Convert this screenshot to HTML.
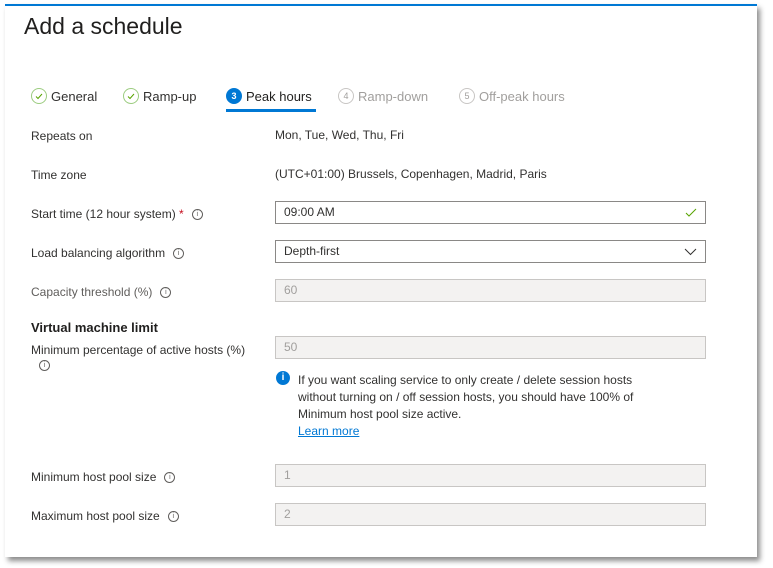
<!DOCTYPE html>
<html><head><style>
body{margin:0;width:773px;height:568px;background:#fff;position:relative;overflow:hidden;font-family:"Liberation Sans",sans-serif;color:#323130}
#panel{position:absolute;left:5px;top:4px;width:752px;height:551px;background:#fff;border-top:2px solid #0078d4;box-shadow:3px 4px 5px rgba(0,0,0,.45)}
.a{position:absolute;white-space:nowrap}
.l{font-size:12px;left:31px}
.v{font-size:12px;left:275px}
.in{position:absolute;left:275px;width:421px;height:21px;border:1px solid #8a8886;font-size:12px;line-height:21px;padding-left:8px}
.dis{background:#f3f2f1;border-color:#c8c6c4;color:#a19f9d}
.i{display:inline-block;width:9px;height:9px;border:1px solid #605e5c;border-radius:50%;font-size:7px;line-height:9px;text-align:center;vertical-align:middle;margin-left:8px;color:#605e5c}
.tab{font-size:13px;top:87px;display:flex;align-items:center;height:18px}
.c,.g{display:inline-block;width:14px;height:14px;border:1px solid #9ccc80;border-radius:50%;margin-right:4px;position:relative;flex:none}
.g{border-color:#c8c6c4;font-size:9px;text-align:center;line-height:14px}
</style></head><body>
<div id="panel"></div>
<div class="a" style="left:24px;top:13px;font-size:23px;color:#201f1e">Add a schedule</div>
<div class="a tab" style="left:31px"><span class="c"><svg width="14" height="14" style="position:absolute;left:0;top:0"><path d="M4 7.5l2 2 4-4.5" fill="none" stroke="#57a300" stroke-width="1"/></svg></span>General</div>
<div class="a tab" style="left:123px"><span class="c"><svg width="14" height="14" style="position:absolute;left:0;top:0"><path d="M4 7.5l2 2 4-4.5" fill="none" stroke="#57a300" stroke-width="1"/></svg></span>Ramp-up</div>
<div class="a tab" style="left:226px;color:#201f1e"><span class="g" style="background:#0078d4;border-color:#0078d4;color:#fff;font-weight:bold">3</span>Peak hours</div>
<div class="a" style="left:226px;top:109px;width:90px;height:3px;background:#0078d4"></div>
<div class="a tab" style="left:338px;color:#a19f9d"><span class="g">4</span>Ramp-down</div>
<div class="a tab" style="left:459px;color:#a19f9d"><span class="g">5</span>Off-peak hours</div>

<div class="a l" style="top:129px">Repeats on</div>
<div class="a v" style="top:128px">Mon, Tue, Wed, Thu, Fri</div>
<div class="a l" style="top:168px">Time zone</div>
<div class="a v" style="top:167px">(UTC+01:00) Brussels, Copenhagen, Madrid, Paris</div>

<div class="a l" style="top:207px">Start time (12 hour system) <span style="color:#c50f1f">*</span><span class="i">i</span></div>
<div class="in" style="top:201px">09:00 AM<svg class="a" style="right:8px;top:6px" width="12" height="10"><path d="M1 5l3 3 7-7" fill="none" stroke="#57a300" stroke-width="1"/></svg></div>
<div class="a l" style="top:246px">Load balancing algorithm<span class="i">i</span></div>
<div class="in" style="top:240px">Depth-first<svg class="a" style="right:8px;top:7px" width="13" height="8"><path d="M1 1l5.5 5.5L12 1" fill="none" stroke="#323130" stroke-width="1"/></svg></div>
<div class="a l" style="top:285px;color:#605e5c">Capacity threshold (%)<span class="i">i</span></div>
<div class="in dis" style="top:279px">60</div>

<div class="a l" style="top:320px;font-weight:bold;font-size:13px;color:#201f1e">Virtual machine limit</div>
<div class="a l" style="top:343px">Minimum percentage of active hosts (%)</div>
<div class="a" style="left:31px;top:357px"><span class="i" style="margin-left:8px">i</span></div>
<div class="in dis" style="top:336px">50</div>

<div class="a" style="left:276px;top:371px;width:14px;height:14px;border-radius:50%;background:#0078d4;color:#fff;font-size:10px;font-weight:bold;text-align:center;line-height:14px">i</div>
<div class="a" style="left:298px;top:372px;font-size:12px;line-height:17px">If you want scaling service to only create / delete session hosts<br>without turning on / off session hosts, you should have 100% of<br>Minimum host pool size active.<br><span style="color:#0078d4;text-decoration:underline">Learn more</span></div>

<div class="a l" style="top:470px">Minimum host pool size<span class="i">i</span></div>
<div class="in dis" style="top:464px">1</div>
<div class="a l" style="top:509px">Maximum host pool size<span class="i">i</span></div>
<div class="in dis" style="top:503px">2</div>
</body></html>
